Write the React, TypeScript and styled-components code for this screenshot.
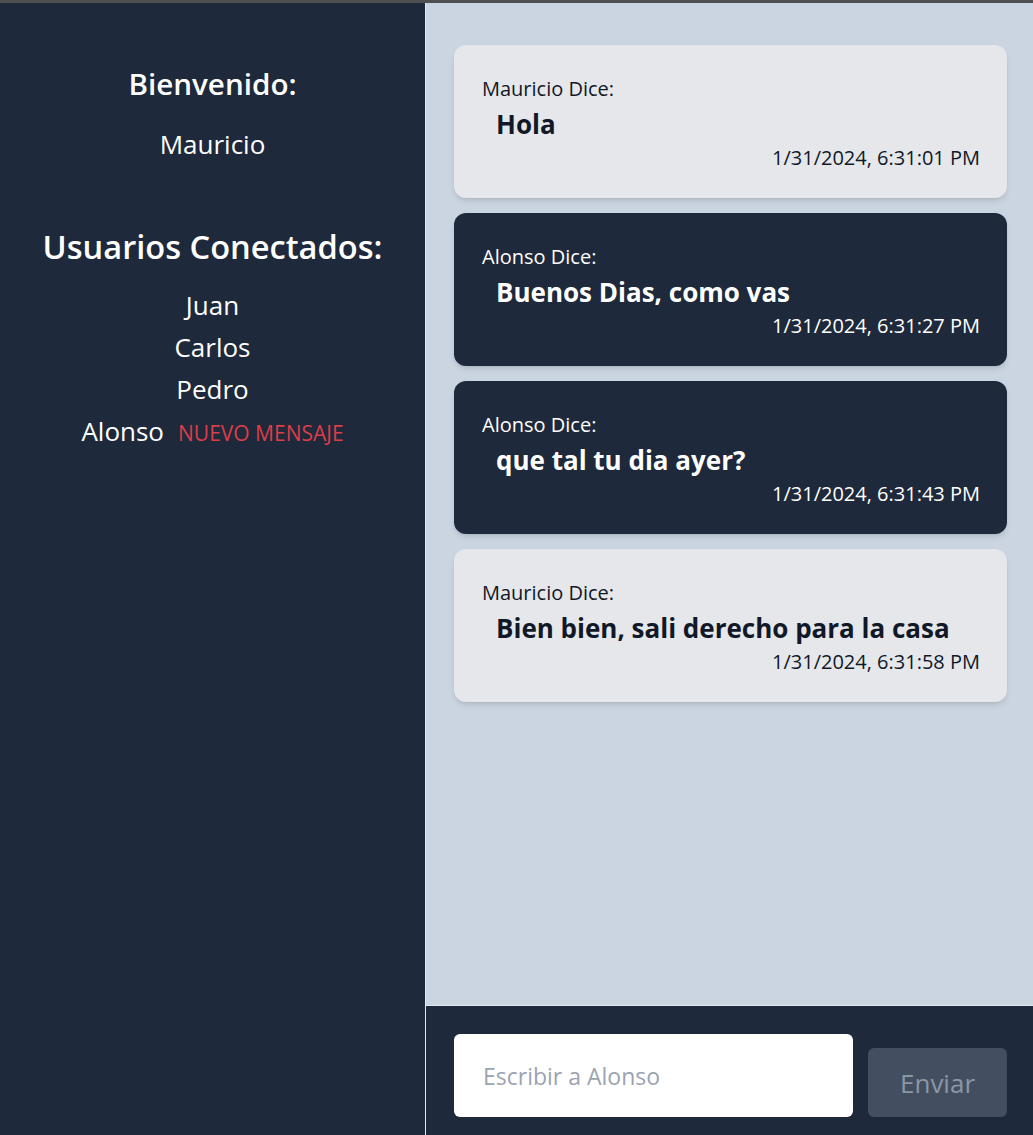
import React from "react";
import styled, { createGlobalStyle } from "styled-components";

const Global = createGlobalStyle`
  html, body { margin: 0; padding: 0; height: 100%; }
  body { font-family: "Open Sans", "Noto Sans", sans-serif; background: #1e293b; }
  #root { height: 100%; }
  * { box-sizing: border-box; }
`;

const Page = styled.div`
  height: 1135px;
  display: flex;
  flex-direction: column;
  border-top: 3px solid #4f5052;
`;

const Main = styled.div`
  flex: 1;
  display: flex;
  min-height: 0;
`;

const Sidebar = styled.aside`
  width: 425px;
  flex-shrink: 0;
  background: #1e293b;
  color: #ffffff;
  display: flex;
  flex-direction: column;
  align-items: center;
  padding-top: 61px;
`;

const Welcome = styled.h2`
  margin: 0;
  font-size: 29.6px;
  font-weight: 600;
  line-height: 40px;
`;

const CurrentUser = styled.div`
  font-size: 26px;
  line-height: 36px;
  margin-top: 22px;
`;

const UsersTitle = styled.h2`
  margin: 63px 0 0;
  font-size: 32.6px;
  font-weight: 600;
  line-height: 44px;
`;

const UserList = styled.ul`
  list-style: none;
  margin: 15px 0 0;
  padding: 0;
  display: flex;
  flex-direction: column;
  align-items: center;
`;

const UserItem = styled.li`
  font-size: 26px;
  line-height: 42px;
  display: flex;
  align-items: baseline;
  gap: 14px;
`;

const NewBadge = styled.span`
  color: #dc3d48;
  font-size: 21px;
`;

const ChatColumn = styled.section`
  flex: 1;
  display: flex;
  flex-direction: column;
  border-left: 1px solid #e2e8f0;
`;

const Messages = styled.div`
  flex: 1;
  background: #cbd5e1;
  padding: 42px 26px 0 28px;
  display: flex;
  flex-direction: column;
  gap: 15px;
`;

const Card = styled.div<{ $dark?: boolean }>`
  background: ${(p) => (p.$dark ? "#1e293b" : "#e5e7eb")};
  color: ${(p) => (p.$dark ? "#ffffff" : "#111827")};
  border-radius: 12px;
  box-shadow: 0 4px 6px -1px rgba(0, 0, 0, 0.1), 0 2px 4px -2px rgba(0, 0, 0, 0.1);
  padding: 30px 27px 26px 28px;
  display: flex;
  flex-direction: column;
`;

const Sender = styled.div`
  font-size: 20px;
  line-height: 28px;
`;

const Text = styled.div`
  font-size: 26px;
  font-weight: 700;
  line-height: 34px;
  margin: 4px 0 0 14px;
`;

const Time = styled.div`
  font-size: 20px;
  line-height: 28px;
  text-align: right;
  margin-top: 3px;
`;

const Composer = styled.div`
  height: 130px;
  background: #1e293b;
  border-top: 1px solid #e2e8f0;
  display: flex;
  align-items: flex-end;
  gap: 15px;
  padding: 0 26px 18px 28px;
`;

const Input = styled.input`
  width: 399px;
  height: 83px;
  border: none;
  border-radius: 6px;
  background: #ffffff;
  padding: 0 29px;
  font-family: inherit;
  font-size: 23px;
  outline: none;
  &::placeholder { color: #9ca3af; }
`;

const SendButton = styled.button`
  width: 139px;
  height: 69px;
  border: none;
  border-radius: 6px;
  background: #434f60;
  color: #8c96a5;
  font-family: inherit;
  font-size: 26px;
`;

const messages = [
  { from: "Mauricio", text: "Hola", time: "1/31/2024, 6:31:01 PM", dark: false },
  { from: "Alonso", text: "Buenos Dias, como vas", time: "1/31/2024, 6:31:27 PM", dark: true },
  { from: "Alonso", text: "que tal tu dia ayer?", time: "1/31/2024, 6:31:43 PM", dark: true },
  { from: "Mauricio", text: "Bien bien, sali derecho para la casa", time: "1/31/2024, 6:31:58 PM", dark: false },
];

export default function App() {
  return (
    <>
      <Global />
      <Page>
        <Main>
          <Sidebar>
            <Welcome>Bienvenido:</Welcome>
            <CurrentUser>Mauricio</CurrentUser>
            <UsersTitle>Usuarios Conectados:</UsersTitle>
            <UserList>
              <UserItem>Juan</UserItem>
              <UserItem>Carlos</UserItem>
              <UserItem>Pedro</UserItem>
              <UserItem>
                Alonso <NewBadge>NUEVO MENSAJE</NewBadge>
              </UserItem>
            </UserList>
          </Sidebar>
          <ChatColumn>
            <Messages>
              {messages.map((m, i) => (
                <Card key={i} $dark={m.dark}>
                  <Sender>{m.from} Dice:</Sender>
                  <Text>{m.text}</Text>
                  <Time>{m.time}</Time>
                </Card>
              ))}
            </Messages>
            <Composer>
              <Input placeholder="Escribir a Alonso" />
              <SendButton>Enviar</SendButton>
            </Composer>
          </ChatColumn>
        </Main>
      </Page>
    </>
  );
}
